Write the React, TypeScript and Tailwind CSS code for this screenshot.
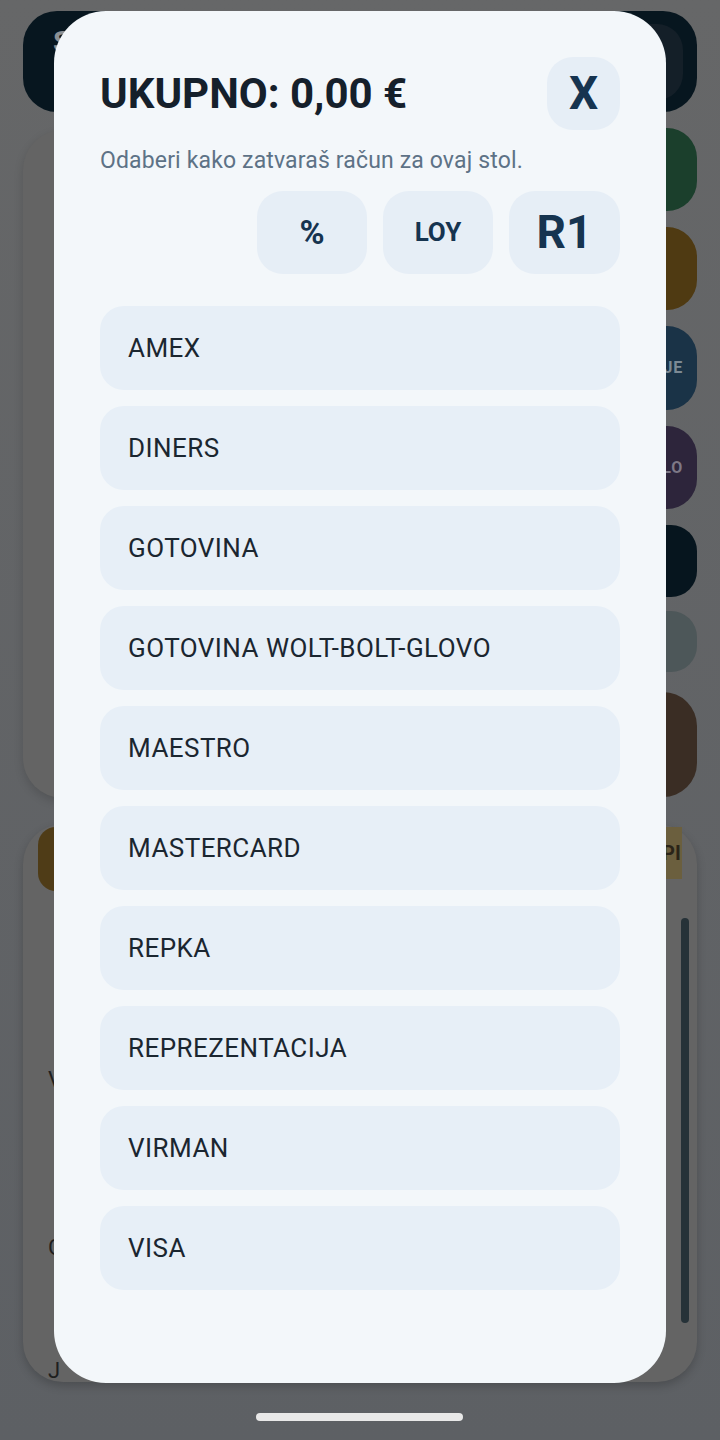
import React from "react";

const methods = [
  "AMEX",
  "DINERS",
  "GOTOVINA",
  "GOTOVINA WOLT-BOLT-GLOVO",
  "MAESTRO",
  "MASTERCARD",
  "REPKA",
  "REPREZENTACIJA",
  "VIRMAN",
  "VISA",
];

function Background() {
  return (
    <div className="flex flex-col w-[720px] h-[1440px] bg-gradient-to-b from-[#666768] to-[#5d6064] pt-[11px] px-[23px]">
      {/* top bar */}
      <div className="h-[101px] rounded-[34px] bg-[#07161f] flex items-center justify-between pl-[30px] pr-[14px]">
        <span className="text-[30px] font-bold text-[#8b9094] -mt-[40px]">S</span>
        <div className="w-[76px] h-[76px] rounded-[26px] bg-[#141f28]" />
      </div>
      {/* main area */}
      <div className="flex gap-[10px] mt-[16px] h-[670px]">
        <div className="flex-1 rounded-[40px] bg-[#646464] shadow-[0_4px_10px_rgba(0,0,0,0.15)] mt-[2px]" />
        <div className="w-[97px] flex flex-col gap-[16px]">
          <div className="h-[83px] rounded-[30px] bg-[#1b3f2c]" />
          <div className="h-[83px] rounded-[30px] bg-[#4f3a12]" />
          <div className="h-[84px] rounded-[30px] bg-[#1a3347] flex items-center justify-end pr-[14px] text-[16px] font-bold text-[#7d8a94] tracking-wider">
            JE
          </div>
          <div className="h-[83px] rounded-[30px] bg-[#2d253b] flex items-center justify-end pr-[14px] text-[16px] font-bold text-[#7d7886] tracking-wider">
            LO
          </div>
          <div className="h-[72px] rounded-[26px] bg-[#06151e]" />
          <div className="h-[61px] rounded-[26px] bg-[#4d5759] -mt-[2px]" />
          <div className="h-[105px] rounded-[34px] bg-[#3a2d24] mt-[4px]" />
        </div>
      </div>
      {/* bottom card */}
      <div className="mt-[26px] h-[558px] rounded-[40px] bg-[#646464] shadow-[0_4px_10px_rgba(0,0,0,0.2)] flex flex-col pl-[15px] pr-[8px] pt-[3px]">
        <div className="flex justify-between pr-[7px]">
          <div className="w-[80px] h-[64px] rounded-[18px] bg-[#4f3c17]" />
          <div className="w-[20px] h-[52px] bg-[#6b5f3e] text-[20px] font-bold text-[#2a2418] flex items-center">
            PI
          </div>
        </div>
        <div className="h-[4px] w-[60px] bg-[#2a3238] rounded mt-[6px]" />
        <div className="flex flex-1 gap-[8px] mt-[6px]">
          <div className="flex-1 flex flex-col text-[22px] text-[#1f1f1f] pl-[10px]">
            <div className="h-[160px]" />
            <div className="h-[20px]">V</div>
            <div className="h-[148px]" />
            <div className="">G</div>
            <div className="h-[90px]" />
            <div>J</div>
          </div>
          <div className="w-[8px] h-[405px] mt-[15px] rounded-full bg-[#263238]" />
        </div>
      </div>
    </div>
  );
}

export default function App() {
  return (
    <div className="relative w-[720px] h-[1440px] overflow-hidden font-['Roboto',sans-serif]">
      <Background />
      {/* modal */}
      <div className="absolute left-[54px] top-[11px] w-[612px] h-[1372px] rounded-[52px] bg-[#f3f7fa] px-[46px] pt-[46px] flex flex-col">
        <div className="flex items-center justify-between">
          <h1 className="text-[42px] font-bold text-[#15202b] leading-none">
            UKUPNO: 0,00 €
          </h1>
          <button className="w-[73px] h-[73px] rounded-[26px] bg-[#e6eef6] text-[46px] font-bold text-[#163450] flex items-center justify-center">
            X
          </button>
        </div>
        <p className="mt-[17px] text-[23px] tracking-[0.15px] text-[#5d7286] leading-[28px]">
          Odaberi kako zatvaraš račun za ovaj stol.
        </p>
        <div className="flex justify-end gap-[16px] mt-[16px]">
          <button className="w-[110px] h-[83px] rounded-[26px] bg-[#e6eef6] text-[34px] font-bold text-[#163450] flex items-center justify-center">
            %
          </button>
          <button className="w-[110px] h-[83px] rounded-[26px] bg-[#e6eef6] text-[26px] font-bold text-[#163450] flex items-center justify-center">
            LOY
          </button>
          <button className="w-[111px] h-[83px] rounded-[26px] bg-[#e6eef6] text-[46px] font-bold text-[#163450] flex items-center justify-center">
            R1
          </button>
        </div>
        <div className="flex flex-col gap-[16px] mt-[32px]">
          {methods.map((m) => (
            <button
              key={m}
              className="h-[84px] rounded-[24px] bg-[#e7eff7] pl-[28px] text-left text-[26px] tracking-[0.45px] text-[#1b2630] flex items-center"
            >
              {m}
            </button>
          ))}
        </div>
      </div>
      {/* home indicator */}
      <div className="absolute left-[256px] top-[1413px] w-[207px] h-[8px] rounded-full bg-[#e8e8e8]" />
    </div>
  );
}
